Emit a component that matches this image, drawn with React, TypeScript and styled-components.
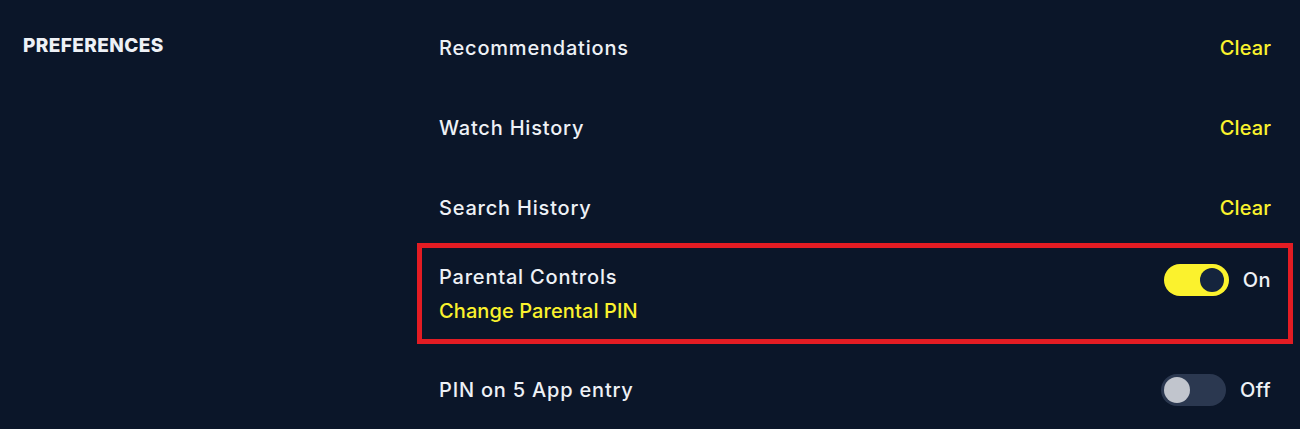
import styled, { createGlobalStyle } from 'styled-components'

const GlobalStyle = createGlobalStyle`
  html, body {
    margin: 0;
    padding: 0;
    background: #0b1629;
  }
  body {
    font-family: Inter, "Noto Sans", sans-serif;
    color: #eef1f6;
  }
`

const Page = styled.div`
  display: grid;
  grid-template-columns: 394px 876px;
  padding: 0 0 0 23px;
  height: 429px;
  overflow: hidden;
`

const SectionTitle = styled.h2`
  margin: 35px 0 0;
  font-size: 19px;
  line-height: 22px;
  font-weight: 800;
  letter-spacing: 0.4px;
  color: #eef1f6;
`

const List = styled.div`
  display: flex;
  flex-direction: column;
  padding-top: 8px;
`

const Row = styled.div<{ $h: number }>`
  display: flex;
  align-items: center;
  justify-content: space-between;
  height: ${(p) => p.$h}px;
  padding: 0 22px;
  box-sizing: border-box;
`

const HighlightRow = styled.div`
  display: flex;
  justify-content: space-between;
  align-items: flex-start;
  margin-top: -5px;
  height: 101px;
  box-sizing: border-box;
  border: 5px solid #e31c23;
  padding: 16px 17px 0 17px;
`

const Label = styled.div`
  font-size: 20px;
  line-height: 24px;
  font-weight: 500;
  letter-spacing: 0.8px;
  color: #eef1f6;
`

const Stack = styled.div`
  display: flex;
  flex-direction: column;
  gap: 10px;
  padding-top: 1px;
`

const Link = styled.span`
  font-size: 20px;
  line-height: 24px;
  font-weight: 500;
  letter-spacing: 0.1px;
  color: #fbf22d;
  cursor: pointer;
`

const ToggleWrap = styled.div`
  display: flex;
  align-items: center;
  gap: 14px;
`

const Track = styled.div<{ $on: boolean }>`
  position: relative;
  width: 65px;
  height: 32px;
  border-radius: 16px;
  background: ${(p) => (p.$on ? '#fbf22d' : '#2b3850')};
`

const Knob = styled.div<{ $on: boolean }>`
  position: absolute;
  top: ${(p) => (p.$on ? 4 : 3)}px;
  left: ${(p) => (p.$on ? 36 : 3)}px;
  width: ${(p) => (p.$on ? 24 : 26)}px;
  height: ${(p) => (p.$on ? 24 : 26)}px;
  border-radius: 50%;
  background: ${(p) => (p.$on ? '#15243d' : '#c1c5cd')};
`

const State = styled.span`
  font-size: 20px;
  line-height: 24px;
  font-weight: 500;
  letter-spacing: 0.4px;
  color: #eef1f6;
`

function Toggle({ on }: { on: boolean }) {
  return (
    <ToggleWrap>
      <Track $on={on}>
        <Knob $on={on} />
      </Track>
      <State>{on ? 'On' : 'Off'}</State>
    </ToggleWrap>
  )
}

const clearable = ['Recommendations', 'Watch History', 'Search History']

export default function App() {
  return (
    <>
      <GlobalStyle />
      <Page>
        <SectionTitle>PREFERENCES</SectionTitle>
        <List>
          {clearable.map((item) => (
            <Row key={item} $h={80}>
              <Label>{item}</Label>
              <Link>Clear</Link>
            </Row>
          ))}
          <HighlightRow>
            <Stack>
              <Label>Parental Controls</Label>
              <Link>Change Parental PIN</Link>
            </Stack>
            <Toggle on />
          </HighlightRow>
          <Row $h={92}>
            <Label>PIN on 5 App entry</Label>
            <Toggle on={false} />
          </Row>
        </List>
      </Page>
    </>
  )
}
